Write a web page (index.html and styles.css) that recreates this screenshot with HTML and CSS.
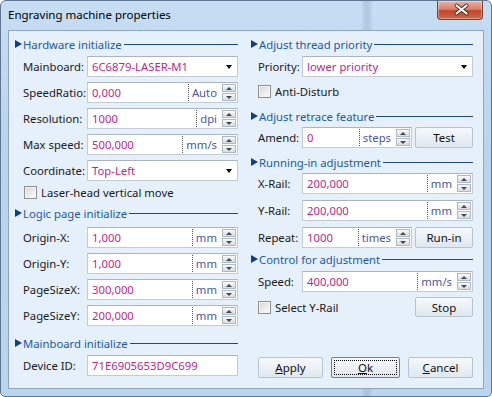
FILE: index.html
```html
<!DOCTYPE html>
<html lang="en">
<head>
    <meta charset="UTF-8">
    <title>Engraving machine properties</title>
    <link rel="stylesheet" href="styles.css">
</head>
<body>
    <div class="window">
        <div class="titlebar">
            <span class="caption">Engraving machine properties</span>
            <div class="close">
                <svg width="46" height="19" viewBox="0 0 46 19">
                    <path d="M19.5 5.5 L29.5 13.5 M29.5 5.5 L19.5 13.5" stroke="#4a2a24" stroke-width="4" stroke-linecap="round"/>
                    <path d="M19.5 5.5 L29.5 13.5 M29.5 5.5 L19.5 13.5" stroke="#ffffff" stroke-width="2.2" stroke-linecap="round"/>
                </svg>
            </div>
        </div>

        <div class="client">
            <!-- left column -->
            <div class="column left">
                <div class="group-title">Hardware initialize</div>
                <div class="row first">
                    <span class="label">Mainboard:</span>
                    <div class="combo"><span class="value">6C6879-LASER-M1</span><span class="arrow"></span></div>
                </div>
                <div class="row">
                    <span class="label">SpeedRatio:</span>
                    <div class="field"><span class="value">0,000</span><span class="unit">Auto</span><span class="spin"><i class="up"></i><i class="down"></i></span></div>
                </div>
                <div class="row">
                    <span class="label">Resolution:</span>
                    <div class="field"><span class="value">1000</span><span class="unit">dpi</span><span class="spin"><i class="up"></i><i class="down"></i></span></div>
                </div>
                <div class="row">
                    <span class="label">Max speed:</span>
                    <div class="field"><span class="value">500,000</span><span class="unit">mm/s</span><span class="spin"><i class="up"></i><i class="down"></i></span></div>
                </div>
                <div class="row">
                    <span class="label">Coordinate:</span>
                    <div class="combo"><span class="value">Top-Left</span><span class="arrow"></span></div>
                </div>
                <label class="check-row after-row"><span class="checkbox"></span>Laser-head vertical move</label>

                <div class="group-title after-check">Logic page initialize</div>
                <div class="row first wide">
                    <span class="label">Origin-X:</span>
                    <div class="field"><span class="value">1,000</span><span class="unit">mm</span><span class="spin"><i class="up"></i><i class="down"></i></span></div>
                </div>
                <div class="row">
                    <span class="label">Origin-Y:</span>
                    <div class="field"><span class="value">1,000</span><span class="unit">mm</span><span class="spin"><i class="up"></i><i class="down"></i></span></div>
                </div>
                <div class="row">
                    <span class="label">PageSizeX:</span>
                    <div class="field"><span class="value">300,000</span><span class="unit">mm</span><span class="spin"><i class="up"></i><i class="down"></i></span></div>
                </div>
                <div class="row">
                    <span class="label">PageSizeY:</span>
                    <div class="field"><span class="value">200,000</span><span class="unit">mm</span><span class="spin"><i class="up"></i><i class="down"></i></span></div>
                </div>

                <div class="group-title after-field">Mainboard initialize</div>
                <div class="row first">
                    <span class="label">Device ID:</span>
                    <div class="field"><span class="value">71E6905653D9C699</span></div>
                </div>
            </div>

            <!-- right column -->
            <div class="column right">
                <div class="group-title">Adjust thread priority</div>
                <div class="row first">
                    <span class="label">Priority:</span>
                    <div class="combo"><span class="value">lower priority</span><span class="arrow"></span></div>
                </div>
                <label class="check-row after-combo"><span class="checkbox"></span>Anti-Disturb</label>

                <div class="group-title after-check">Adjust retrace feature</div>
                <div class="row tight">
                    <span class="label">Amend:</span>
                    <div class="field"><span class="value">0</span><span class="unit">steps</span><span class="spin"><i class="up"></i><i class="down"></i></span></div>
                    <button class="button side">Test</button>
                </div>

                <div class="group-title after-row">Running-in adjustment</div>
                <div class="row tight">
                    <span class="label">X-Rail:</span>
                    <div class="field"><span class="value">200,000</span><span class="unit">mm</span><span class="spin"><i class="up"></i><i class="down"></i></span></div>
                </div>
                <div class="row wide">
                    <span class="label">Y-Rail:</span>
                    <div class="field"><span class="value">200,000</span><span class="unit">mm</span><span class="spin"><i class="up"></i><i class="down"></i></span></div>
                </div>
                <div class="row wide">
                    <span class="label">Repeat:</span>
                    <div class="field"><span class="value">1000</span><span class="unit">times</span><span class="spin"><i class="up"></i><i class="down"></i></span></div>
                    <button class="button side">Run-in</button>
                </div>

                <div class="group-title tight">Control for adjustment</div>
                <div class="row first">
                    <span class="label">Speed:</span>
                    <div class="field"><span class="value">400,000</span><span class="unit">mm/s</span><span class="spin"><i class="up"></i><i class="down"></i></span></div>
                </div>
                <div class="check-line">
                    <label class="check-row"><span class="checkbox"></span>Select Y-Rail</label>
                    <button class="button side stop">Stop</button>
                </div>

                <div class="dialog-buttons">
                    <button class="button"><u>A</u>pply</button>
                    <button class="button default"><span class="focus"><u>O</u>k</span></button>
                    <button class="button"><u>C</u>ancel</button>
                </div>
            </div>
        </div>
    </div>
</body>
</html>
```

FILE: styles.css
```css
* {
    box-sizing: border-box;
}

body {
    margin: 0;
    font-family: "Noto Sans", "Open Sans", sans-serif;
    font-size: 11.3px;
    color: #1a1a1a;
}

.window {
    width: 492px;
    height: 397px;
    display: flex;
    flex-direction: column;
    border: 1px solid #5f7690;
    border-radius: 6px 6px 5px 5px;
    background:
        linear-gradient(90deg, transparent 360px, rgba(90, 120, 150, 0.18) 364px, rgba(90, 120, 150, 0.18) 368px, transparent 372px),
        linear-gradient(180deg, #c6ddf3 0%, #b9d3ee 40%, #bcd5ee 100%);
}

.titlebar {
    height: 29px;
    display: flex;
    align-items: flex-start;
    padding-left: 7px;
}

.caption {
    margin-top: 6px;
    line-height: 16px;
    font-size: 11.5px;
    color: #000;
}

.close {
    margin-left: auto;
    margin-right: 8px;
    width: 46px;
    height: 19px;
    border: 1px solid #7a3b30;
    border-top: none;
    border-radius: 0 0 4px 4px;
    background: linear-gradient(180deg, #e9b4a6 0%, #d9806b 45%, #c2442b 55%, #cf6a45 100%);
    box-shadow: inset 0 0 0 1px rgba(255, 255, 255, 0.35);
}

.close svg {
    display: block;
    margin-top: -1px;
    margin-left: -1px;
}

.client {
    flex: 1;
    margin: 0 7px 7px 7px;
    border: 1px solid #8ea6be;
    background: #e5f0fa;
    display: flex;
    gap: 13px;
    padding: 5px 10px 0 6px;
}

.column {
    display: flex;
    flex-direction: column;
}

.column.left {
    width: 223px;
}

.column.right {
    width: 222px;
}

/* section headings */
.group-title {
    height: 16px;
    display: flex;
    align-items: center;
    color: #1c5aa6;
    white-space: nowrap;
}

.group-title::before {
    content: "";
    width: 0;
    height: 0;
    border-top: 4.5px solid transparent;
    border-bottom: 4.5px solid transparent;
    border-left: 7px solid #0d3f8a;
    margin-right: 1px;
}

.group-title::after {
    content: "";
    flex: 1;
    height: 1px;
    margin-left: 2px;
    margin-top: 1px;
    background: #1f4a80;
}

.group-title.after-check { margin-top: 5px; }
.group-title.after-field { margin-top: 9px; }
.group-title.after-row { margin-top: 6px; }
.group-title.tight { margin-top: 3px; }

.column.right .group-title.after-check { margin-top: 9px; }

/* form rows */
.row {
    height: 21px;
    display: flex;
    align-items: center;
    margin-top: 5px;
}

.row.first { margin-top: 4px; }
.row.wide { margin-top: 6px; }
.row.tight { margin-top: 3px; }

.label {
    flex: none;
    white-space: nowrap;
}

.left .label {
    width: 72px;
    padding-left: 8px;
}

.right .label {
    width: 51px;
    padding-left: 7px;
}

.field,
.combo {
    flex: 1;
    height: 21px;
    display: flex;
    align-items: center;
    background: #fff;
    border: 1px solid #c3ccd6;
    border-top-color: #abb5c1;
    min-width: 0;
}

.value {
    flex: 1;
    padding-left: 4px;
    color: #c41f8a;
    white-space: nowrap;
}

.unit {
    align-self: stretch;
    display: flex;
    align-items: center;
    border-left: 1px dotted #555;
    padding: 0 5px 0 3px;
    color: #4a58a8;
    margin: 1px 0;
}

.spin {
    align-self: stretch;
    width: 14px;
    display: flex;
    flex-direction: column;
    gap: 1px;
    margin: 1px 1px 1px 0;
}

.spin i {
    flex: 1;
    position: relative;
    border: 1px solid #aeb9c6;
    background: linear-gradient(180deg, #fbfbfb 0%, #e6e6e6 55%, #d9dde2 100%);
}

.spin i::after {
    content: "";
    position: absolute;
    left: 3px;
    top: 2px;
    border-left: 3px solid transparent;
    border-right: 3px solid transparent;
}

.spin .up::after {
    border-bottom: 3px solid #3c4a5c;
}

.spin .down::after {
    border-top: 3px solid #3c4a5c;
}

.arrow {
    width: 0;
    height: 0;
    margin-right: 5px;
    border-left: 3.5px solid transparent;
    border-right: 3.5px solid transparent;
    border-top: 4px solid #000;
}

/* checkboxes */
.check-row {
    height: 16px;
    display: flex;
    align-items: center;
    white-space: nowrap;
}

.left .check-row { padding-left: 9px; }
.right .check-row { padding-left: 7px; }

.check-row.after-row { margin-top: 3px; }
.check-row.after-combo { margin-top: 6px; }

.checkbox {
    width: 13px;
    height: 13px;
    margin-right: 4px;
    border: 1px solid #8f8f8f;
    background: linear-gradient(135deg, #d4d4d4 0%, #eeeeee 60%, #fbfbfb 100%);
    box-shadow: inset 0 0 0 1px #f4f4f4;
}

.check-line {
    margin-top: 5px;
    height: 20px;
    display: flex;
    align-items: center;
    justify-content: space-between;
}

/* buttons */
.button {
    font: inherit;
    font-size: 11.5px;
    color: #111;
    height: 21px;
    padding: 0;
    border: 1px solid #b7c3cf;
    border-radius: 2px;
    background: linear-gradient(180deg, #f6f9fc 0%, #eaf0f6 50%, #dfe7ef 100%);
}

.button.side {
    flex: none;
    width: 58px;
    margin-left: 3px;
}

.button.stop {
    height: 20px;
}

.dialog-buttons {
    margin-top: auto;
    margin-bottom: 10px;
    padding-left: 7px;
    display: flex;
    gap: 8px;
}

.dialog-buttons .button {
    flex: 1;
}

.button.default {
    border-color: #6c7f93;
    padding: 2px;
}

.focus {
    display: block;
    height: 100%;
    border: 1px dotted #000;
    line-height: 14px;
}
```
